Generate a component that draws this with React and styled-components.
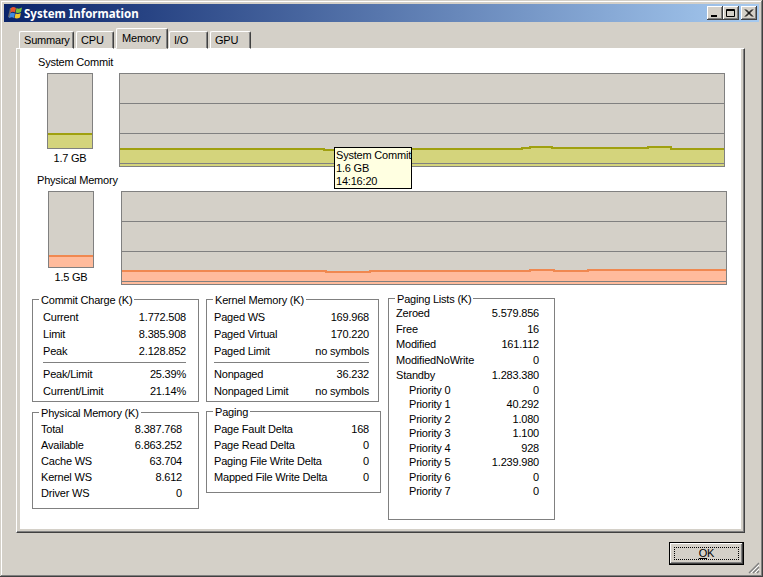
import React from 'react';
import styled, { createGlobalStyle } from 'styled-components';

const Global = createGlobalStyle`
  html, body { margin: 0; padding: 0; background: #d4d0c8; }
  * { box-sizing: border-box; }
`;

const Window = styled.div`
  position: relative;
  width: 763px;
  height: 577px;
  padding: 4px;
  display: flex;
  flex-direction: column;
  background: #d4d0c8;
  color: #000;
  font-family: "Liberation Sans", Arial, sans-serif;
  font-size: 11px;
  letter-spacing: -0.2px;
  line-height: 13px;
  box-shadow: inset -1px -1px 0 #404040, inset 1px 1px 0 #d4d0c8, inset -2px -2px 0 #808080, inset 2px 2px 0 #fff;
`;

const TitleBar = styled.div`
  height: 18px;
  flex: none;
  display: flex;
  align-items: center;
  padding: 0 2px 0 3px;
  background: linear-gradient(90deg, #0a246a, #a6caf0);
`;

const TitleText = styled.span`
  margin-left: 1px;
  flex: 1;
  color: #fff;
  font-family: "Noto Sans", sans-serif;
  font-size: 11.5px;
  font-weight: 700;
  letter-spacing: 0;
`;

const CaptionButton = styled.div`
  width: 16px;
  height: 14px;
  margin-left: ${p => p.$gap || 0}px;
  background: #d4d0c8;
  box-shadow: inset -1px -1px 0 #404040, inset 1px 1px 0 #fff, inset -2px -2px 0 #808080;
  display: flex;
  align-items: center;
  justify-content: center;
`;

const TabStrip = styled.div`
  display: flex;
  align-items: flex-end;
  height: 21px;
  margin: 6px 0 -1px 0;
  padding-left: 15px;
  position: relative;
  z-index: 1;
`;

const Tab = styled.div`
  width: ${p => p.$w}px;
  height: ${p => (p.$active ? 21 : 18)}px;
  margin-right: ${p => p.$mr}px;
  padding: ${p => (p.$active ? '3px 0 0 5px' : '2px 0 0 4px')};
  background: #d4d0c8;
  border-top: 1px solid #fff;
  border-left: 1px solid #fff;
  border-right: 1px solid #404040;
  border-radius: 2px 2px 0 0;
  border-bottom: 1px solid ${p => (p.$active ? '#d4d0c8' : '#fff')};
  box-shadow: inset -1px 0 0 #808080;
`;

const Panel = styled.div`
  margin-left: 12px;
  width: 729px;
  height: 485px;
  padding: 0 3px 3px;
  background: #d4d0c8;
  border-top: 1px solid #fff;
  border-left: 1px solid #fff;
  border-right: 1px solid #404040;
  border-bottom: 1px solid #404040;
  box-shadow: inset -1px -1px 0 #808080;
`;

const PanelInner = styled.div`
  height: 100%;
  background: #fff;
  display: flex;
  flex-direction: column;
`;

const SectionLabel = styled.div`
  height: 24px;
  padding: 7px 0 0 ${p => p.$left}px;
`;

const GraphRow = styled.div`
  display: flex;
  height: ${p => p.$h}px;
  padding-left: ${p => p.$left}px;
`;

const MeterColumn = styled.div`
  width: 46px;
  margin-right: ${p => p.$gap}px;
  flex: none;
`;

const Meter = styled.div`
  height: ${p => p.$h}px;
  border: 1px solid #808080;
  background: #d4d0c8;
  display: flex;
  flex-direction: column;
  justify-content: flex-end;
`;

const MeterFill = styled.div`
  height: ${p => p.$h}px;
  background: ${p => p.$fill};
  border-top: 2px solid ${p => p.$line};
`;

const MeterValue = styled.div`
  margin-top: 3px;
  text-align: center;
`;

const Graph = styled.div`
  position: relative;
  width: 606px;
  height: 94px;
  border: 1px solid #808080;
  background: #d4d0c8;
  svg { display: block; }
`;

const Tip = styled.div`
  position: absolute;
  left: 214px;
  top: 73px;
  width: 78px;
  height: 42px;
  padding: 1px 0 0 1px;
  background: #ffffe1;
  border: 1px solid #000;
  white-space: nowrap;
`;

const Columns = styled.div`
  display: flex;
  align-items: flex-start;
  gap: 7px;
  margin: 14px 0 0 12px;
`;

const Stack = styled.div`
  display: flex;
  flex-direction: column;
  gap: ${p => p.$gap}px;
  width: ${p => p.$w}px;
  flex: none;
  margin-top: ${p => p.$top || 0}px;
`;

const GroupBox = styled.div`
  position: relative;
  width: ${p => p.$w || '100%'};
  height: ${p => p.$h}px;
  padding: ${p => p.$pad};
  border: 1px solid #808080;
`;

const Legend = styled.span`
  position: absolute;
  left: 6px;
  top: -6px;
  padding: 0 2px;
  background: #fff;
`;

const Row = styled.div`
  display: flex;
  justify-content: space-between;
  height: ${p => p.$h}px;
  line-height: ${p => p.$h}px;
  padding-left: ${p => p.$indent || 0}px;
  white-space: nowrap;
`;

const Rule = styled.div`
  height: 1px;
  background: #808080;
  margin: ${p => p.$m};
`;

const Footer = styled.div`
  flex: 1;
  display: flex;
  justify-content: flex-end;
  align-items: flex-start;
  padding: 9px 15px 0 0;
`;

const OkButton = styled.div`
  width: 75px;
  height: 23px;
  padding: 4px;
  background: #d4d0c8;
  border: 1px solid #000;
  box-shadow: inset -1px -1px 0 #404040, inset 1px 1px 0 #fff, inset -2px -2px 0 #808080;
`;

const OkFocus = styled.div`
  height: 100%;
  border: 1px dotted #000;
  display: flex;
  align-items: center;
  justify-content: center;
`;

const Grip = styled.svg`
  position: absolute;
  right: 3px;
  bottom: 3px;
`;

const WinFlag = () => (
  <svg width="16" height="15" viewBox="0 0 16 15">
    <path d="M1 11 L3 2 L5 2 L3 12 Z" fill="#6a6a6a" />
    <path d="M4 2 Q6 0 9 2 L8 6.5 Q6 5 3.5 6.5 Z" fill="#e8542c" />
    <path d="M9.5 2 Q12 3.5 15 1.5 L14 6 Q11 7.5 8.6 6.5 Z" fill="#7cc13a" />
    <path d="M3.2 7.5 Q5.5 6 8 7.5 L7 12 Q5 10.5 2.2 12 Z" fill="#3f8ae0" />
    <path d="M8.5 7.5 Q11 8.5 13.8 7 L13 11.5 Q10 13 7.6 12 Z" fill="#f5c52d" />
  </svg>
);

const GridLines = () =>
  [29, 59, 89].map(y => <line key={y} x1="0" x2="604" y1={y + 0.5} y2={y + 0.5} stroke="#808080" />);

// each point starts a flat piece of the line, in the graph's own pixels
function Chart({ points, fill, line }) {
  const step = [];
  points.forEach(([x, y], i) => {
    step.push(`${x},${y}`);
    if (points[i + 1]) step.push(`${points[i + 1][0]},${y}`);
  });
  return (
    <svg width="604" height="92" viewBox="0 0 604 92" shapeRendering="crispEdges">
      <polygon points={`0,92 ${step.join(' ')} 604,92`} fill={fill} />
      <GridLines />
      <polyline points={step.join(' ')} fill="none" stroke={line} strokeWidth="2" />
    </svg>
  );
}

const commitLine = [[0, 75], [204, 76], [230, 75], [402, 74], [410, 73], [432, 74], [528, 73], [551, 75], [604, 75]];
const physLine = [[0, 79], [204, 80], [248, 79], [408, 78], [432, 79], [466, 78], [604, 78]];

const commitRows = [['Current', '1.772.508'], ['Limit', '8.385.908'], ['Peak', '2.128.852']];
const commitPct = [['Peak/Limit', '25.39%'], ['Current/Limit', '21.14%']];
const physRows = [['Total', '8.387.768'], ['Available', '6.863.252'], ['Cache WS', '63.704'], ['Kernel WS', '8.612'], ['Driver WS', '0']];
const kernelRows = [['Paged WS', '169.968'], ['Paged Virtual', '170.220'], ['Paged Limit', 'no symbols']];
const kernelNon = [['Nonpaged', '36.232'], ['Nonpaged Limit', 'no symbols']];
const pagingRows = [['Page Fault Delta', '168'], ['Page Read Delta', '0'], ['Paging File Write Delta', '0'], ['Mapped File Write Delta', '0']];
const listRows = [['Zeroed', '5.579.856'], ['Free', '16'], ['Modified', '161.112'], ['ModifiedNoWrite', '0'], ['Standby', '1.283.380']];
const priorityRows = [['Priority 0', '0'], ['Priority 1', '40.292'], ['Priority 2', '1.080'], ['Priority 3', '1.100'], ['Priority 4', '928'], ['Priority 5', '1.239.980'], ['Priority 6', '0'], ['Priority 7', '0']];

const rows = (list, h, indent) =>
  list.map(([k, v]) => (
    <Row key={k} $h={h} $indent={indent}>
      <span>{k}</span>
      <span>{v}</span>
    </Row>
  ));

export default function App() {
  return (
    <Window>
      <Global />
      <TitleBar>
        <WinFlag />
        <TitleText>System Information</TitleText>
        <CaptionButton>
          <svg width="10" height="9"><rect x="1" y="6" width="6" height="2" fill="#000" /></svg>
        </CaptionButton>
        <CaptionButton>
          <svg width="10" height="9"><path d="M0.5 0.5H8.5V7.5H0.5Z M0 1.5H9" fill="none" stroke="#000" /></svg>
        </CaptionButton>
        <CaptionButton $gap={2}>
          <svg width="10" height="9"><path d="M1 0.5 L8 7.5 M2 0.5 L9 7.5 M8 0.5 L1 7.5 M9 0.5 L2 7.5" stroke="#000" /></svg>
        </CaptionButton>
      </TitleBar>

      <TabStrip>
        <Tab $w={55} $mr={2}>Summary</Tab>
        <Tab $w={38} $mr={2}>CPU</Tab>
        <Tab $w={52} $mr={1} $active>Memory</Tab>
        <Tab $w={39} $mr={2}>I/O</Tab>
        <Tab $w={41} $mr={0}>GPU</Tab>
      </TabStrip>

      <Panel>
        <PanelInner>
          <SectionLabel $left={18}>System Commit</SectionLabel>
          <GraphRow $h={94} $left={27}>
            <MeterColumn $gap={26}>
              <Meter $h={76}><MeterFill $h={15} $fill="#d4d47c" $line="#a0a010" /></Meter>
              <MeterValue>1.7 GB</MeterValue>
            </MeterColumn>
            <Graph>
              <Chart points={commitLine} fill="#d4d47c" line="#a0a010" />
              <Tip>System Commit<br />1.6 GB<br />14:16:20</Tip>
            </Graph>
          </GraphRow>

          <SectionLabel $left={17}>Physical Memory</SectionLabel>
          <GraphRow $h={94} $left={28}>
            <MeterColumn $gap={27}>
              <Meter $h={77}><MeterFill $h={12} $fill="#ffbb9c" $line="#f08850" /></Meter>
              <MeterValue>1.5 GB</MeterValue>
            </MeterColumn>
            <Graph>
              <Chart points={physLine} fill="#ffbb9c" line="#f08850" />
            </Graph>
          </GraphRow>

          <Columns>
            <Stack $w={167} $gap={10}>
              <GroupBox $h={103} $pad="9px 12px 0 10px">
                <Legend>Commit Charge (K)</Legend>
                {rows(commitRows, 17)}
                <Rule $m="2px 0 3px" />
                {rows(commitPct, 17)}
              </GroupBox>
              <GroupBox $h={97} $pad="8px 16px 0 8px">
                <Legend>Physical Memory (K)</Legend>
                {rows(physRows, 16)}
              </GroupBox>
            </Stack>
            <Stack $w={175} $gap={9}>
              <GroupBox $w="173px" $h={103} $pad="9px 9px 0 7px">
                <Legend>Kernel Memory (K)</Legend>
                {rows(kernelRows, 17)}
                <Rule $m="2px 0 3px" />
                {rows(kernelNon, 17)}
              </GroupBox>
              <GroupBox $h={82} $pad="9px 11px 0 7px">
                <Legend>Paging</Legend>
                {rows(pagingRows, 16)}
              </GroupBox>
            </Stack>
            <Stack $w={167} $gap={0} $top={-1}>
              <GroupBox $h={222} $pad="7px 15px 0 7px">
                <Legend>Paging Lists (K)</Legend>
                {rows(listRows, 15.5)}
                <Row $h={13.5} $indent={13}><span>{priorityRows[0][0]}</span><span>{priorityRows[0][1]}</span></Row>
                {rows(priorityRows.slice(1), 14.5, 13)}
              </GroupBox>
            </Stack>
          </Columns>
        </PanelInner>
      </Panel>

      <Footer>
        <OkButton>
          <OkFocus><span><u>O</u>K</span></OkFocus>
        </OkButton>
      </Footer>

      <Grip width="12" height="12" viewBox="0 0 12 12">
        <path d="M11 1 L1 11 M11 5 L5 11 M11 9 L9 11" stroke="#808080" strokeWidth="1.4" />
        <path d="M11 3 L3 11 M11 7 L7 11" stroke="#fff" />
      </Grip>
    </Window>
  );
}
